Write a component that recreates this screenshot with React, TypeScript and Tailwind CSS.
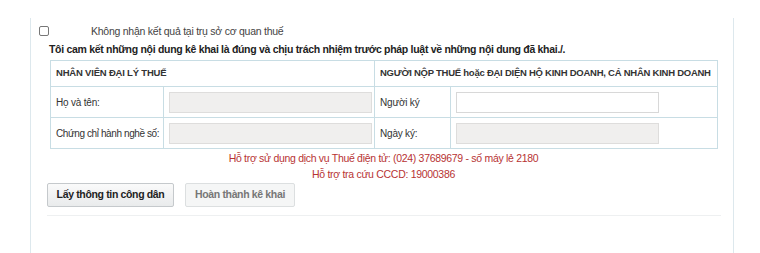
export default function App() {
  const cell = "border border-[#c8dde4] px-[5px] align-middle";
  return (
    <div className="w-[760px] h-[253px] bg-white pt-[18px] font-['Liberation_Sans',Arial,sans-serif] text-[#333]">
      <div className="ml-[30px] w-[704px] h-[235px] border-l border-r border-[#dde8ed] pl-[8px] pr-[16px]">
        <div className="flex items-center h-[20px] pt-[5px]">
          <span className="w-[10px] h-[10px] border border-[#777] rounded-[2px] bg-white" />
          <span className="ml-[42px] mt-[2px] text-[10.5px] leading-none tracking-[-0.25px] text-[#444]">
            Không nhận kết quả tại trụ sở cơ quan thuế
          </span>
        </div>
        <div className="ml-[10px] mt-[3px] text-[10.5px] font-bold leading-[16px] tracking-[-0.3px] text-[#222]">
          Tôi cam kết những nội dung kê khai là đúng và chịu trách nhiệm trước pháp luật về những nội dung đã khai./.
        </div>
        <table className="ml-[11px] mt-[3px] w-[667px] border-collapse table-fixed text-[10px] tracking-[-0.2px] text-[#333]">
          <colgroup>
            <col className="w-[113px]" />
            <col className="w-[211px]" />
            <col className="w-[76px]" />
            <col className="w-[267px]" />
          </colgroup>
          <tbody>
            <tr className="h-[26px]">
              <td colSpan={2} className={`${cell} text-[9.5px] font-bold tracking-[-0.2px]`}>
                NHÂN VIÊN ĐẠI LÝ THUẾ
              </td>
              <td colSpan={2} className={`${cell} text-[9.5px] font-bold tracking-[-0.25px] whitespace-nowrap`}>
                NGƯỜI NỘP THUẾ hoặc ĐẠI DIỆN HỘ KINH DOANH, CÁ NHÂN KINH DOANH
              </td>
            </tr>
            <tr className="h-[31px]">
              <td className={cell}>Họ và tên:</td>
              <td className={`${cell} px-[4px]`}>
                <div className="h-[21px] w-[203px] bg-[#f0efee] border border-[#dedddc]" />
              </td>
              <td className={cell}>Người ký</td>
              <td className={cell}>
                <div className="h-[21px] w-[203px] bg-white border border-[#d8d8d8]" />
              </td>
            </tr>
            <tr className="h-[31px]">
              <td className={`${cell} whitespace-nowrap tracking-[-0.4px]`}>Chứng chỉ hành nghề số:</td>
              <td className={`${cell} px-[4px]`}>
                <div className="h-[21px] w-[203px] bg-[#f0efee] border border-[#dedddc]" />
              </td>
              <td className={cell}>Ngày ký:</td>
              <td className={cell}>
                <div className="h-[21px] w-[203px] bg-[#f0efee] border border-[#dedddc]" />
              </td>
            </tr>
          </tbody>
        </table>
        <div className="ml-[11px] w-[667px] mt-[1px] text-center text-[10.5px] leading-[16px] tracking-[-0.3px] text-[#b73333]">
          <div>Hỗ trợ sử dụng dịch vụ Thuế điện tử: (024) 37689679 - số máy lẻ 2180</div>
          <div>Hỗ trợ tra cứu CCCD: 19000386</div>
        </div>
        <div className="ml-[8px] mt-[1px] flex gap-[11px]">
          <button className="h-[24px] w-[127px] border border-[#c5c9cc] rounded-[2px] bg-gradient-to-b from-[#fafafa] to-[#e9ebec] text-[10.5px] font-bold tracking-[-0.35px] text-[#222] whitespace-nowrap">
            Lấy thông tin công dân
          </button>
          <button className="h-[24px] w-[110px] border border-[#dcdfe0] rounded-[2px] bg-[#f5f6f6] text-[10.5px] font-bold tracking-[-0.35px] text-[#777] whitespace-nowrap">
            Hoàn thành kê khai
          </button>
        </div>
        <div className="ml-[8px] mt-[8px] h-px w-[674px] bg-[#eef0f1]" />
      </div>
    </div>
  );
}
